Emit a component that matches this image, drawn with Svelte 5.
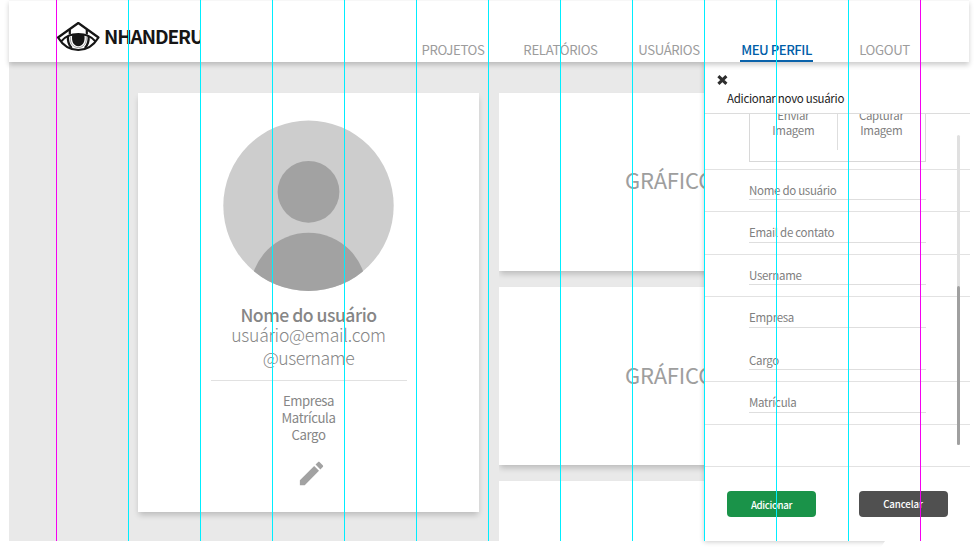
<script>
  const guides = Array.from({ length: 13 }, (_, i) => i);
  const nav = [
    { label: 'PROJETOS', cls: 'projetos' },
    { label: 'RELATÓRIOS', cls: 'relatorios' },
    { label: 'USUÁRIOS', cls: 'usuarios' },
    { label: 'MEU PERFIL', cls: 'active' },
    { label: 'LOGOUT', cls: 'logout' }
  ];
  const fields = [
    { label: 'Nome do usuário', cls: 'short' },
    { label: 'Email de contato', cls: 'tall' },
    { label: 'Username', cls: 'short' },
    { label: 'Empresa', cls: 'open' },
    { label: 'Cargo', cls: 'tall low' },
    { label: 'Matrícula', cls: 'tall' }
  ];
</script>

<div class="screen">
  <header>
    <div class="brand">
      <svg class="eye" width="44" height="31" viewBox="0 0 44 31" fill="none" stroke="#161616" stroke-width="2.2">
        <path d="M2 16.5 L22.3 2 L42.5 16.5 C37 25.5 30 29 22.3 29 C14.5 29 7.5 25.5 2 16.5Z" stroke-linejoin="round" />
        <path d="M5.2 20.4 C9.5 14.8 14.5 13 22.3 13 C30 13 35 14.8 39.4 20.4" />
        <path d="M13.8 8.5 V13.5 M30.8 8.5 V13.5 M12 15 C11.5 20 12.6 24 15.8 27 M32.6 15 C33 20 32 24 28.8 27" />
        <path d="M16.3 13.5 H28.3 C29.5 20.5 27 25.2 22.3 25.2 C17.6 25.2 15.1 20.5 16.3 13.5Z" fill="#161616" stroke="none" />
        <path d="M14.4 16 C13.6 21.5 16.8 26.6 22.3 26.6 C27.8 26.6 31 21.5 30.2 16" stroke-width="0.4" />
      </svg>
      <span class="name">NHANDERU</span>
    </div>
    <nav>
      {#each nav as item}
        <a class={item.cls}><span>{item.label}</span></a>
      {/each}
    </nav>
  </header>

  <main>
    <section class="card profile">
      <svg class="avatar" width="171" height="171" viewBox="0 0 171 171">
        <defs><clipPath id="face"><circle cx="85.5" cy="85.8" r="85.2" /></clipPath></defs>
        <g clip-path="url(#face)">
          <rect width="171" height="171" fill="#cdcdcd" />
          <circle cx="85.5" cy="71.8" r="30.9" fill="#a2a2a2" />
          <circle cx="85.5" cy="170.8" r="58" fill="#a2a2a2" />
        </g>
      </svg>
      <h2>Nome do usuário</h2>
      <p class="mail">usuário@email.com</p>
      <p class="user">@username</p>
      <hr />
      <p class="meta">Empresa</p>
      <p class="meta">Matrícula</p>
      <p class="meta">Cargo</p>
      <svg class="pencil" width="31" height="31" viewBox="0 0 24 24" fill="#a2a2a2">
        <path d="M3 17.25V21h3.75L17.81 9.94l-3.75-3.75L3 17.25zM20.71 7.04c.39-.39.39-1.02 0-1.41l-2.34-2.34c-.39-.39-1.02-.39-1.41 0l-1.83 1.83 3.75 3.75 1.83-1.83z" />
      </svg>
    </section>
    <div class="charts">
      <section class="card chart">GRÁFICO</section>
      <section class="card chart">GRÁFICO</section>
      <section class="card chart last"></section>
    </div>

    <aside>
      <div class="head">
        <svg width="11" height="10" viewBox="0 0 11 10" stroke="#2e2e2e" stroke-width="3.1"><path d="M1.4 1.2 L9.4 8.8 M9.4 1.2 L1.4 8.8" /></svg>
        <h3>Adicionar novo usuário</h3>
      </div>
      <div class="body">
        <div class="form">
          <div class="upload">
            <div class="boxes">
              <div class="left"><span>Enviar</span><span>Imagem</span></div>
              <div class="right"><span>Capturar</span><span>Imagem</span></div>
            </div>
          </div>
          {#each fields as f}
            <div class="row {f.cls}"><label><span>{f.label}</span></label></div>
          {/each}
          <div class="row blank"></div>
        </div>
        <div class="track"><div class="thumb"></div></div>
      </div>
      <div class="actions">
        <button class="add">Adicionar</button>
        <button class="cancel">Cancelar</button>
      </div>
    </aside>
  </main>

  <div class="guides">
    {#each guides as g}<i class:edge={g === 0 || g === 12}></i>{/each}
  </div>
</div>

<style>
  :global(body) { background: #fff; }
  * { box-sizing: border-box; }
  .screen {
    position: relative; width: 977px; height: 550px; overflow: hidden; padding: 0 8px 0 9px;
    font-family: "Noto Sans CJK SC", "Noto Sans", sans-serif; color: #868686;
  }
  header {
    position: relative; z-index: 2; width: 960px; height: 62px; display: flex; background: #fff;
    border-top: 1px solid #f7f7f7; box-shadow: 0 3px 5px rgba(0, 0, 0, 0.2);
  }
  .brand { width: 192px; display: flex; overflow: hidden; padding-left: 47px; flex: none; }
  .eye { margin-top: 20px; flex: none; }
  .name {
    margin: 21px 0 0 4px; font-size: 19.1px; line-height: 28px; font-weight: 700;
    letter-spacing: -1.1px; color: #161616; white-space: nowrap;
  }
  nav { display: flex; padding-left: 219px; }
  nav a {
    height: 61px; padding-top: 39px; font-size: 13.2px; line-height: 20px; color: #9c9c9c; letter-spacing: -0.35px;
    white-space: nowrap; display: flex; justify-content: center;
  }
  .projetos { width: 66px; }
  .relatorios { width: 77px; margin-left: 36px; }
  .usuarios { width: 64px; margin-left: 38px; }
  nav .active { width: 73px; margin-left: 39px; color: #005ea8; font-weight: 500; letter-spacing: -0.5px; border-bottom: 2px solid #0a62aa; }
  .logout { width: 53px; margin-left: 45px; }

  main {
    display: flex; width: 961px; height: 479px; clip-path: inset(0 -8px -9px 0);
    background: linear-gradient(90deg, #e9e9e9 697px, #fff 697px);
  }
  .profile { width: 341px; height: 419px; margin: 31px 0 0 129px; flex: none; display: flex; flex-direction: column; align-items: center; }
  .card { background: #fff; box-shadow: 0 4px 6px -1px rgba(0, 0, 0, 0.2); }
  .avatar { margin-top: 27px; flex: none; }
  h2, h3, p { margin: 0; font-weight: 400; white-space: nowrap; }
  h2 { margin-top: 13px; font-size: 17.6px; line-height: 22px; font-weight: 500; letter-spacing: -0.5px; }
  .mail, .user { font-size: 17.6px; line-height: 22px; font-weight: 300; letter-spacing: -0.25px; }
  .mail { margin-top: -2px; }
  .user { margin-top: 1px; letter-spacing: -0.45px; }
  hr { width: 196px; height: 1px; border: 0; background: #e1e1e1; margin: 11px 0 11px; }
  .meta { font-size: 13.2px; line-height: 17px; letter-spacing: -0.4px; }
  .pencil { margin: 15px 0 0 5px; }
  .charts { width: 206px; flex: none; margin-left: 20px; padding-top: 31px; display: flex; flex-direction: column; gap: 16px; height: 479px; overflow: hidden; }
  .chart { height: 178px; width: 340px; flex: none; padding: 70px 0 0 126px; font-size: 22px; line-height: 32px; color: #9e9e9e; letter-spacing: -0.2px; }
  .chart + .chart { padding-top: 71px; }
  .last { height: 60px; }

  aside {
    position: relative; width: 265px; height: 479px; flex: none; display: flex; flex-direction: column;
    background: #fff; box-shadow: -1px 1px 5px rgba(0, 0, 0, 0.2);
    clip-path: polygon(-9px 0, 265px 0, 265px 479px, 180px 479px, 174px 488px, -9px 488px);
  }
  .head { height: 52px; border-bottom: 1px solid #dcdcdc; padding: 13px 0 0 12px; display: flex; flex-direction: column; flex: none; }
  h3 { font-size: 11.5px; line-height: 18px; color: #222; margin: 4px 0 0 10px; letter-spacing: -0.3px; }
  .head svg { flex: none; }
  .body { height: 353px; display: flex; overflow: hidden; flex: none; position: relative; }
  .form { width: 265px; flex: none; font-size: 11.5px; color: #808080; letter-spacing: -0.3px; }
  .upload { height: 56px; border-bottom: 1px solid #e2e2e2; padding-left: 44px; }
  .boxes { width: 177px; height: 48px; border: 1px solid #d8d8d8; border-top: 0; display: flex; }
  .boxes div { display: flex; flex-direction: column; align-items: center; line-height: 15px; width: 88px; height: 36px; margin-top: -6px; }
  .boxes .left { border-right: 1px solid #dedede; height: 42px; }
  .row { height: 42px; border-bottom: 1px solid #e2e2e2; padding-left: 44px; }
  .row label { display: block; width: 177px; height: 31px; padding-top: 12px; line-height: 17px; border-bottom: 1px solid #dedede; }
  .row.short label { height: 30px; }
  .row.tall { height: 43px; }
  .row.low label { padding-top: 13px; }
  .row.open { border-bottom-color: transparent; }
  .track { position: absolute; left: 252px; top: 21px; width: 3px; height: 310px; background: #e0e0e0; border-radius: 2px; display: flex; align-items: flex-end; }
  .thumb { width: 3px; height: 159px; background: #a0a0a0; border-radius: 2px; }
  .actions { display: flex; padding: 24px 0 0 22px; gap: 43px; }
  button { width: 89px; height: 26px; border: 0; border-radius: 4px; padding: 0; color: #fff; font: 500 9.7px/24px "Noto Sans CJK SC", sans-serif; letter-spacing: -0.35px; }
  .add { background: #1a9349; padding-top: 1px; }
  .cancel { background: #505050; padding: 0 1px 1px 0; letter-spacing: -0.1px; }

  .guides { position: absolute; z-index: 3; left: 56px; top: 0; height: 541px; display: flex; pointer-events: none; }
  .guides i { width: 72px; border-left: 1px solid #00eeff; }
  .guides i.edge { border-color: #f500f0; }
</style>
